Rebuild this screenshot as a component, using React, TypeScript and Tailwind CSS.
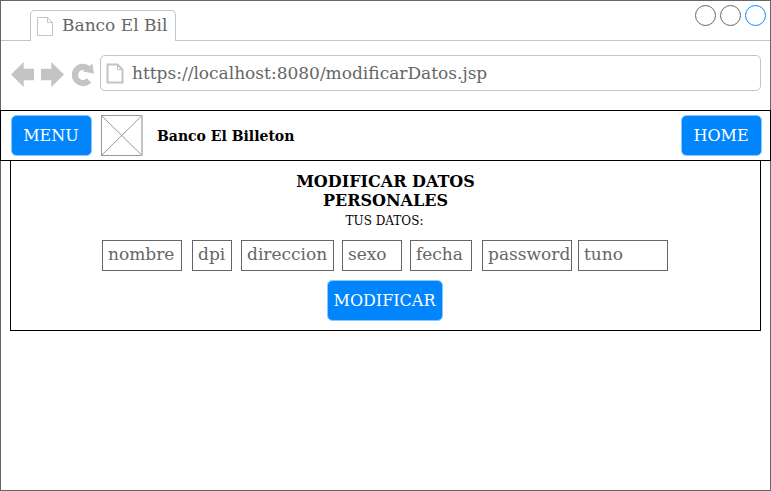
import React from "react";

const fields = [
  { label: "nombre", box: "w-[80px]" },
  { label: "dpi", box: "w-[40px] ml-[10px]" },
  { label: "direccion", box: "w-[93px] ml-[9px]" },
  { label: "sexo", box: "w-[60px] ml-[8px]" },
  { label: "fecha", box: "w-[62px] ml-[8px]" },
  { label: "password", box: "w-[90px] ml-[10px]" },
  { label: "tuno", box: "w-[90px] ml-[6px]" },
];

function PageIcon({ wide = 1 }: { wide?: number }) {
  return (
    <svg width="18" height="21" viewBox="0 0 18 21" fill="none" stroke="#c4c4c4" strokeWidth={wide} className="shrink-0">
      <path d="M1.5 1.5H11.5L16.5 6.5V19.5H1.5Z" />
      <path d="M11.5 1.5V6.5H16.5" strokeWidth="1" />
    </svg>
  );
}

function BlueButton({ children, width }: { children: React.ReactNode; width: string }) {
  return (
    <button className={`${width} flex h-[41px] shrink-0 items-center justify-center rounded-[5px] border border-[#8cc8ff] bg-[#0085fc] bg-clip-padding pr-[1px] text-[16px] leading-[19px] text-white`}>
      {children}
    </button>
  );
}

function TabStrip() {
  return (
    <div className="flex h-[40px]">
      <div className="w-[29px] border-b border-[#c4c4c4]" />
      <div className="mt-[9px] flex w-[146px] rounded-t-[5px] border border-b-0 border-[#c4c4c4] pt-[5px] pl-[5px] text-[17px] leading-[20px] whitespace-nowrap text-[#666]">
        <PageIcon />
        <span className="-mt-px ml-[8px]">Banco El Bil</span>
      </div>
      <div className="flex flex-1 justify-end border-b border-[#c4c4c4] pt-[4px] pr-[4px]">
        <svg width="71" height="21" fill="none" stroke="#666">
          <circle cx="10.5" cy="10.5" r="10" />
          <circle cx="35.5" cy="10.5" r="10" />
          <circle cx="60.5" cy="10.5" r="10" stroke="#008cff" />
        </svg>
      </div>
    </div>
  );
}

function AddressBar() {
  return (
    <div className="flex h-[69px] pt-[14px] pl-[9px]">
      <svg width="90" height="36" viewBox="10 55 90 36" fill="#c4c4c4" className="shrink-0">
        <path d="M11 74.5L23.7 62V68.7H34V80.3H23.7V87Z" />
        <path d="M64 74.5L51.3 62V68.7H41V80.3H51.3V87Z" />
        <path d="M88.3 68.8A8.1 8.1 0 1 0 89 80.4" fill="none" stroke="#c4c4c4" strokeWidth="6.2" />
        <path d="M92.4 63.5L94 73.6L82.8 71.6Z" />
      </svg>
      <div className="flex h-[36px] w-[661px] rounded-[5px] border border-[#c4c4c4] pt-[7px] pl-[5px] text-[17px] leading-[20px] text-[#666]">
        <PageIcon wide={2} />
        <span className="ml-[8px]">https://localhost:8080/modificarDatos.jsp</span>
      </div>
    </div>
  );
}

export default function App() {
  return (
    <div className="h-[491px] w-[771px] border border-[#666] bg-white font-['DejaVu_Serif',serif]">
      <TabStrip />
      <AddressBar />
      <header className="-mx-px flex h-[51px] border border-black pt-[4px] pl-[10px]">
        <BlueButton width="w-[81px]">MENU</BlueButton>
        <svg width="42" height="41" fill="none" stroke="#999" className="ml-[9px]">
          <path d="M41 .5H.5V40.5H41M.5 .5L41 40.5M41 .5L.5 40.5" />
          <path d="M41 0V41" stroke="#c4c4c4" strokeWidth="2" />
        </svg>
        <h1 className="mt-[13px] ml-[14px] text-[14px] leading-[17px] font-bold">Banco El Billeton</h1>
        <div className="mr-[8px] ml-auto">
          <BlueButton width="w-[81px]">HOME</BlueButton>
        </div>
      </header>
      <main className="mx-[9px] flex h-[170px] flex-col items-center border border-t-0 border-black pt-[11px]">
        <h2 className="w-[190px] text-center text-[16px] leading-[19px] font-bold">MODIFICAR DATOS PERSONALES</h2>
        <p className="mt-[4px] pr-[2px] text-[12px] leading-[14px]">TUS DATOS:</p>
        <div className="mt-[12px] flex h-[31px] self-start pl-[91px] text-[17px] leading-[20px] text-[#666]">
          {fields.map(({ label, box }) => (
            <div key={label} className={`${box} shrink-0 border border-[#666] pt-[3px] pl-[5px] whitespace-nowrap`}>
              {label}
            </div>
          ))}
        </div>
        <div className="mt-[9px] pr-[1px]">
          <BlueButton width="w-[116px]">MODIFICAR</BlueButton>
        </div>
      </main>
    </div>
  );
}
